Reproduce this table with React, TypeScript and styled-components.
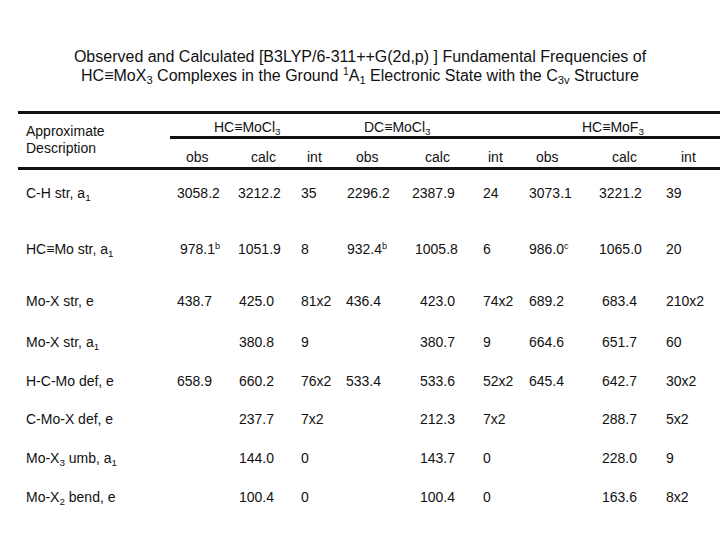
import React from "react";
import styled, { createGlobalStyle } from "styled-components";

const GlobalStyle = createGlobalStyle`
  body {
    margin: 0;
    background: #fff;
    color: #111;
    font-family: "Liberation Sans", Arial, sans-serif;
  }
`;

const COLS = "159px 61px 63px 45px 65px 71px 47px 69px 68px 54px";

const Page = styled.div`
  width: 720px;
  height: 540px;
  overflow: hidden;
  padding-top: 47px;
  box-sizing: border-box;
`;

const Title = styled.div`
  text-align: center;
  font-size: 16px;
  line-height: 19px;
  margin-bottom: 26px;
`;

const Sub = styled.sub`
  font-size: 0.7em;
  line-height: 0;
  vertical-align: -0.3em;
`;

const Sup = styled.sup`
  font-size: 0.65em;
  line-height: 0;
  vertical-align: 0.55em;
`;

const Table = styled.div`
  margin-left: 18px;
  width: 702px;
  border-top: 3px solid #111;
  font-size: 14px;
`;

const Head = styled.div`
  display: grid;
  grid-template-columns: ${COLS};
  border-bottom: 3px solid #111;
  line-height: 17px;
`;

const LabelHead = styled.div`
  grid-row: 1 / 3;
  grid-column: 1;
  padding: 9px 0 0 8px;
`;

const GroupHead = styled.div<{ $col: string; $indent: number; $pull?: number }>`
  grid-row: 1;
  grid-column: ${(p) => p.$col};
  margin-left: ${(p) => -(p.$pull ?? 0)}px;
  padding: 5px 0 0 ${(p) => p.$indent + (p.$pull ?? 0)}px;
  height: 17px;
  border-bottom: 3px solid #111;
  white-space: nowrap;
`;

const SubHead = styled.div<{ $indent: number }>`
  grid-row: 2;
  padding: 10px 0 1px ${(p) => p.$indent}px;
`;

const Row = styled.div<{ $space: number }>`
  display: grid;
  grid-template-columns: ${COLS};
  padding-top: ${(p) => p.$space}px;
  line-height: 18px;
`;

const Cell = styled.div<{ $indent?: number }>`
  padding-left: ${(p) => p.$indent ?? 0}px;
  white-space: nowrap;
`;

const LabelCell = styled(Cell)`
  padding-left: 8px;
`;

type Value = { text: React.ReactNode; indent?: number };

type RowData = {
  space: number;
  label: React.ReactNode;
  values: Value[];
};

const v = (text: React.ReactNode, indent = 0): Value => ({ text, indent });

const rows: RowData[] = [
  {
    space: 14,
    label: (
      <>
        C-H str, a<Sub>1</Sub>
      </>
    ),
    values: [
      v("3058.2"),
      v("3212.2"),
      v("35"),
      v("2296.2", 1),
      v("2387.9", 1),
      v("24", 1),
      v("3073.1"),
      v("3221.2", 1),
      v("39"),
    ],
  },
  {
    space: 38,
    label: (
      <>
        HC≡Mo str, a<Sub>1</Sub>
      </>
    ),
    values: [
      v(
        <>
          978.1<Sup>b</Sup>
        </>,
        3
      ),
      v("1051.9"),
      v("8"),
      v(
        <>
          932.4<Sup>b</Sup>
        </>,
        1
      ),
      v("1005.8", 4),
      v("6", 1),
      v(
        <>
          986.0<Sup>c</Sup>
        </>
      ),
      v("1065.0", 1),
      v("20"),
    ],
  },
  {
    space: 34,
    label: "Mo-X str, e",
    values: [
      v("438.7"),
      v("425.0", 1),
      v("81x2"),
      v("436.4"),
      v("423.0", 9),
      v("74x2", 1),
      v("689.2"),
      v("683.4", 4),
      v("210x2"),
    ],
  },
  {
    space: 23,
    label: (
      <>
        Mo-X str, a<Sub>1</Sub>
      </>
    ),
    values: [
      v(""),
      v("380.8", 1),
      v("9"),
      v(""),
      v("380.7", 9),
      v("9", 1),
      v("664.6"),
      v("651.7", 4),
      v("60"),
    ],
  },
  {
    space: 21,
    label: "H-C-Mo def, e",
    values: [
      v("658.9"),
      v("660.2", 1),
      v("76x2"),
      v("533.4"),
      v("533.6", 9),
      v("52x2", 1),
      v("645.4"),
      v("642.7", 4),
      v("30x2"),
    ],
  },
  {
    space: 20,
    label: "C-Mo-X def, e",
    values: [
      v(""),
      v("237.7", 1),
      v("7x2"),
      v(""),
      v("212.3", 9),
      v("7x2", 1),
      v(""),
      v("288.7", 4),
      v("5x2"),
    ],
  },
  {
    space: 21,
    label: (
      <>
        Mo-X<Sub>3</Sub> umb, a<Sub>1</Sub>
      </>
    ),
    values: [
      v(""),
      v("144.0", 1),
      v("0"),
      v(""),
      v("143.7", 9),
      v("0", 1),
      v(""),
      v("228.0", 4),
      v("9"),
    ],
  },
  {
    space: 21,
    label: (
      <>
        Mo-X<Sub>2</Sub> bend, e
      </>
    ),
    values: [
      v(""),
      v("100.4", 1),
      v("0"),
      v(""),
      v("100.4", 9),
      v("0", 1),
      v(""),
      v("163.6", 4),
      v("8x2"),
    ],
  },
];

const subHeads: [string, number][] = [
  ["obs", 9],
  ["calc", 13],
  ["int", 6],
  ["obs", 10],
  ["calc", 14],
  ["int", 6],
  ["obs", 7],
  ["calc", 14],
  ["int", 15],
];

const App = (): JSX.Element => (
  <Page>
    <GlobalStyle />
    <Title>
      Observed and Calculated [B3LYP/6-311++G(2d,p) ] Fundamental Frequencies of
      <br />
      HC≡MoX<Sub>3</Sub> Complexes in the Ground <Sup>1</Sup>A<Sub>1</Sub>{" "}
      Electronic State with the C<Sub>3v</Sub> Structure
    </Title>
    <Table>
      <Head>
        <LabelHead>
          Approximate
          <br />
          Description
        </LabelHead>
        <GroupHead $col="2 / 5" $indent={37} $pull={7}>
          HC≡MoCl<Sub>3</Sub>
        </GroupHead>
        <GroupHead $col="5 / 8" $indent={18}>
          DC≡MoCl<Sub>3</Sub>
        </GroupHead>
        <GroupHead $col="8 / 11" $indent={53}>
          HC≡MoF<Sub>3</Sub>
        </GroupHead>
        {subHeads.map(([text, indent], i) => (
          <SubHead key={i} $indent={indent} style={{ gridColumn: i + 2 }}>
            {text}
          </SubHead>
        ))}
      </Head>
      {rows.map((row, i) => (
        <Row key={i} $space={row.space}>
          <LabelCell>{row.label}</LabelCell>
          {row.values.map((val, j) => (
            <Cell key={j} $indent={val.indent}>
              {val.text}
            </Cell>
          ))}
        </Row>
      ))}
    </Table>
  </Page>
);

export default App;
